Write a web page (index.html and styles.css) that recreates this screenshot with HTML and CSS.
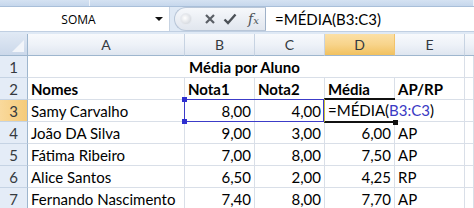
FILE: index.html
```html
<!DOCTYPE html>
<html lang="pt-BR">
<head>
    <meta charset="UTF-8">
    <title>Média por Aluno</title>
    <link rel="stylesheet" href="styles.css">
</head>
<body>
    <div class="ribbon-edge">
        <div class="ribbon-part left"></div>
        <div class="ribbon-part"></div>
    </div>
    <div class="formula-bar">
        <div class="name-box">
            <span class="name">SOMA</span>
            <span class="drop"></span>
        </div>
        <div class="fx-group">
            <span class="grip"></span>
            <svg class="fx-btn" width="12" height="12" viewBox="0 0 12 12">
                <path d="M2 2 L10 10 M10 2 L2 10" stroke="#5a5f66" stroke-width="2.2" fill="none"/>
            </svg>
            <svg class="fx-btn" width="14" height="12" viewBox="0 0 14 12">
                <path d="M1.5 6.5 L5 10 L12.5 1.5" stroke="#4c5157" stroke-width="2.4" fill="none"/>
            </svg>
            <span class="fx-label"><i>f</i><i class="sub">x</i></span>
        </div>
        <div class="formula">=MÉDIA(B3:C3)</div>
    </div>
    <div class="gap"></div>

    <div class="sheet">
        <div class="corner"><span class="tri"></span></div>
        <div class="hd">A</div>
        <div class="hd">B</div>
        <div class="hd">C</div>
        <div class="hd sel">D</div>
        <div class="hd">E</div>
        <div class="hd last"></div>

        <div class="rh">1</div>
        <div class="c b center span5">Média por Aluno</div>
        <div class="c"></div>

        <div class="rh">2</div>
        <div class="c b">Nomes</div>
        <div class="c b">Nota1</div>
        <div class="c b">Nota2</div>
        <div class="c b">Média</div>
        <div class="c b">AP/RP</div>
        <div class="c"></div>

        <div class="rh sel">3</div>
        <div class="c">Samy Carvalho</div>
        <div class="c num">8,00</div>
        <div class="c num">4,00</div>
        <div class="c"></div>
        <div class="c"></div>
        <div class="c"></div>

        <div class="rh">4</div>
        <div class="c">João DA Silva</div>
        <div class="c num">9,00</div>
        <div class="c num">3,00</div>
        <div class="c num">6,00</div>
        <div class="c">AP</div>
        <div class="c"></div>

        <div class="rh">5</div>
        <div class="c">Fátima Ribeiro</div>
        <div class="c num">7,00</div>
        <div class="c num">8,00</div>
        <div class="c num">7,50</div>
        <div class="c">AP</div>
        <div class="c"></div>

        <div class="rh">6</div>
        <div class="c">Alice Santos</div>
        <div class="c num">6,50</div>
        <div class="c num">2,00</div>
        <div class="c num">4,25</div>
        <div class="c">RP</div>
        <div class="c"></div>

        <div class="rh">7</div>
        <div class="c">Fernando Nascimento</div>
        <div class="c num">7,40</div>
        <div class="c num">8,00</div>
        <div class="c num">7,70</div>
        <div class="c">AP</div>
        <div class="c"></div>

        <!-- range reference B3:C3 -->
        <div class="range">
            <span class="handle tl"></span>
            <span class="handle bl"></span>
        </div>
        <!-- cell in edit mode D3 -->
        <div class="edit">
            <span class="edit-text">=MÉDIA(<span class="ref">B3:C3</span>)</span>
            <span class="fill"></span>
        </div>
    </div>
</body>
</html>
```

FILE: styles.css
```css
body {
    margin: 0;
    width: 474px;
    height: 208px;
    overflow: hidden;
    background-color: #fff;
    font-family: Lato, "Open Sans", sans-serif;
    font-size: 15px;
    color: #000;
}

/* top of the window, under the ribbon */
.ribbon-edge {
    display: flex;
    height: 6px;
    background: linear-gradient(#d5e2f2, #c6d7ec);
    border-bottom: 1px solid #a9bfd9;
}
.ribbon-part {
    flex: 1;
    border-right: 1px solid #eef3fa;
}
.ribbon-part.left {
    flex: 0 0 89px;
}

.formula-bar {
    display: flex;
    height: 24px;
    background-color: #dfe9f5;
    border-bottom: 1px solid #c0cfe2;
}
.name-box {
    display: flex;
    align-items: center;
    width: 169px;
    background-color: #fff;
    border-right: 1px solid #c7d3e2;
}
.name {
    flex: 1;
    text-align: center;
    font-family: "Open Sans", sans-serif;
    font-size: 12px;
    padding-left: 2px;
}
.drop {
    width: 0;
    height: 0;
    margin-right: 6px;
    border-left: 4px solid transparent;
    border-right: 4px solid transparent;
    border-top: 4px solid #111;
}
.fx-group {
    display: flex;
    align-items: center;
    gap: 7px;
    width: 92px;
    margin-left: 4px;
    padding-left: 5px;
    background: linear-gradient(#f6f8fb, #e1e6ee);
    border: 1px solid #b8c6d8;
    border-right: 1px solid #9fb1c8;
    border-radius: 12px 0 0 12px;
    box-sizing: border-box;
}
.grip {
    width: 10px;
    height: 10px;
    border-radius: 50%;
    background: radial-gradient(circle at 40% 40%, #fff, #c9ced6);
    border: 1px solid #e6e9ee;
    margin-right: 5px;
}
.fx-label {
    font-family: "DejaVu Serif", serif;
    font-size: 14px;
    color: #4d5257;
    margin-left: 4px;
}
.fx-label .sub {
    font-size: 10px;
}
.formula {
    flex: 1;
    background-color: #fff;
    padding-left: 9px;
    line-height: 24px;
    white-space: nowrap;
}
.gap {
    height: 2px;
    background-color: #dfe9f5;
}

/* grid */
.sheet {
    position: relative;
    display: grid;
    grid-template-columns: 28px 157px 70px 70px 70px 70px 1fr;
    grid-auto-rows: 22px;
}
.corner {
    position: relative;
    background: linear-gradient(#dfe8f4, #cbd8ea);
    border-right: 1px solid #9eb6ce;
    border-bottom: 1px solid #9eb6ce;
    box-sizing: border-box;
}
.tri {
    position: absolute;
    right: 3px;
    bottom: 3px;
    width: 0;
    height: 0;
    border-left: 12px solid transparent;
    border-bottom: 12px solid #f2f5fa;
}
.hd {
    background: linear-gradient(#f7f9fc 0%, #eef2f8 50%, #dfe6f0 100%);
    border-right: 1px solid #c7d3e2;
    border-bottom: 1px solid #9eb6ce;
    box-sizing: border-box;
    text-align: center;
    line-height: 21px;
    font-size: 14px;
    color: #353a40;
}
.hd.sel {
    background: linear-gradient(#fbe0a6 0%, #f8d48b 50%, #f1c15f 100%);
    border-right-color: #f2c36b;
}
.hd.last {
    border-right: none;
}
.rh {
    background-color: #e4ecf7;
    border-right: 1px solid #9eb6ce;
    border-bottom: 1px solid #c5d3e4;
    box-sizing: border-box;
    text-align: center;
    line-height: 22px;
    font-size: 15px;
    color: #353a40;
}
.rh.sel {
    background: linear-gradient(90deg, #f9d99c, #f5cb7a);
}
.c {
    border-right: 1px solid #d9dfe8;
    border-bottom: 1px solid #d9dfe8;
    box-sizing: border-box;
    padding: 0 3px;
    line-height: 22px;
    white-space: nowrap;
    overflow: hidden;
}
.b {
    font-weight: bold;
}
.center {
    text-align: center;
}
.span5 {
    grid-column: span 5;
    padding-left: 0;
}
.num {
    text-align: right;
}

/* overlays */
.range {
    position: absolute;
    left: 184px;
    top: 65px;
    width: 140px;
    height: 23px;
    border: 1px solid #3c3cc8;
    box-sizing: border-box;
}
.handle {
    position: absolute;
    width: 5px;
    height: 5px;
    background-color: #2f2fd0;
}
.handle.tl {
    left: -3px;
    top: -3px;
}
.handle.bl {
    left: -3px;
    bottom: -3px;
}
.edit {
    position: absolute;
    left: 324px;
    top: 64px;
    width: 71px;
    height: 25px;
    border-top: 2px solid #111;
    border-bottom: 2px solid #111;
    border-left: 1px solid #c9c23c;
    box-sizing: border-box;
}
.edit-text {
    display: inline-block;
    position: relative;
    width: max-content;
    background-color: #fff;
    padding: 0 4px 0 3px;
    line-height: 21px;
    white-space: nowrap;
}
.ref {
    color: #3a3ac4;
}
.fill {
    position: absolute;
    right: -3px;
    bottom: -4px;
    width: 5px;
    height: 5px;
    background-color: #111;
}
```
